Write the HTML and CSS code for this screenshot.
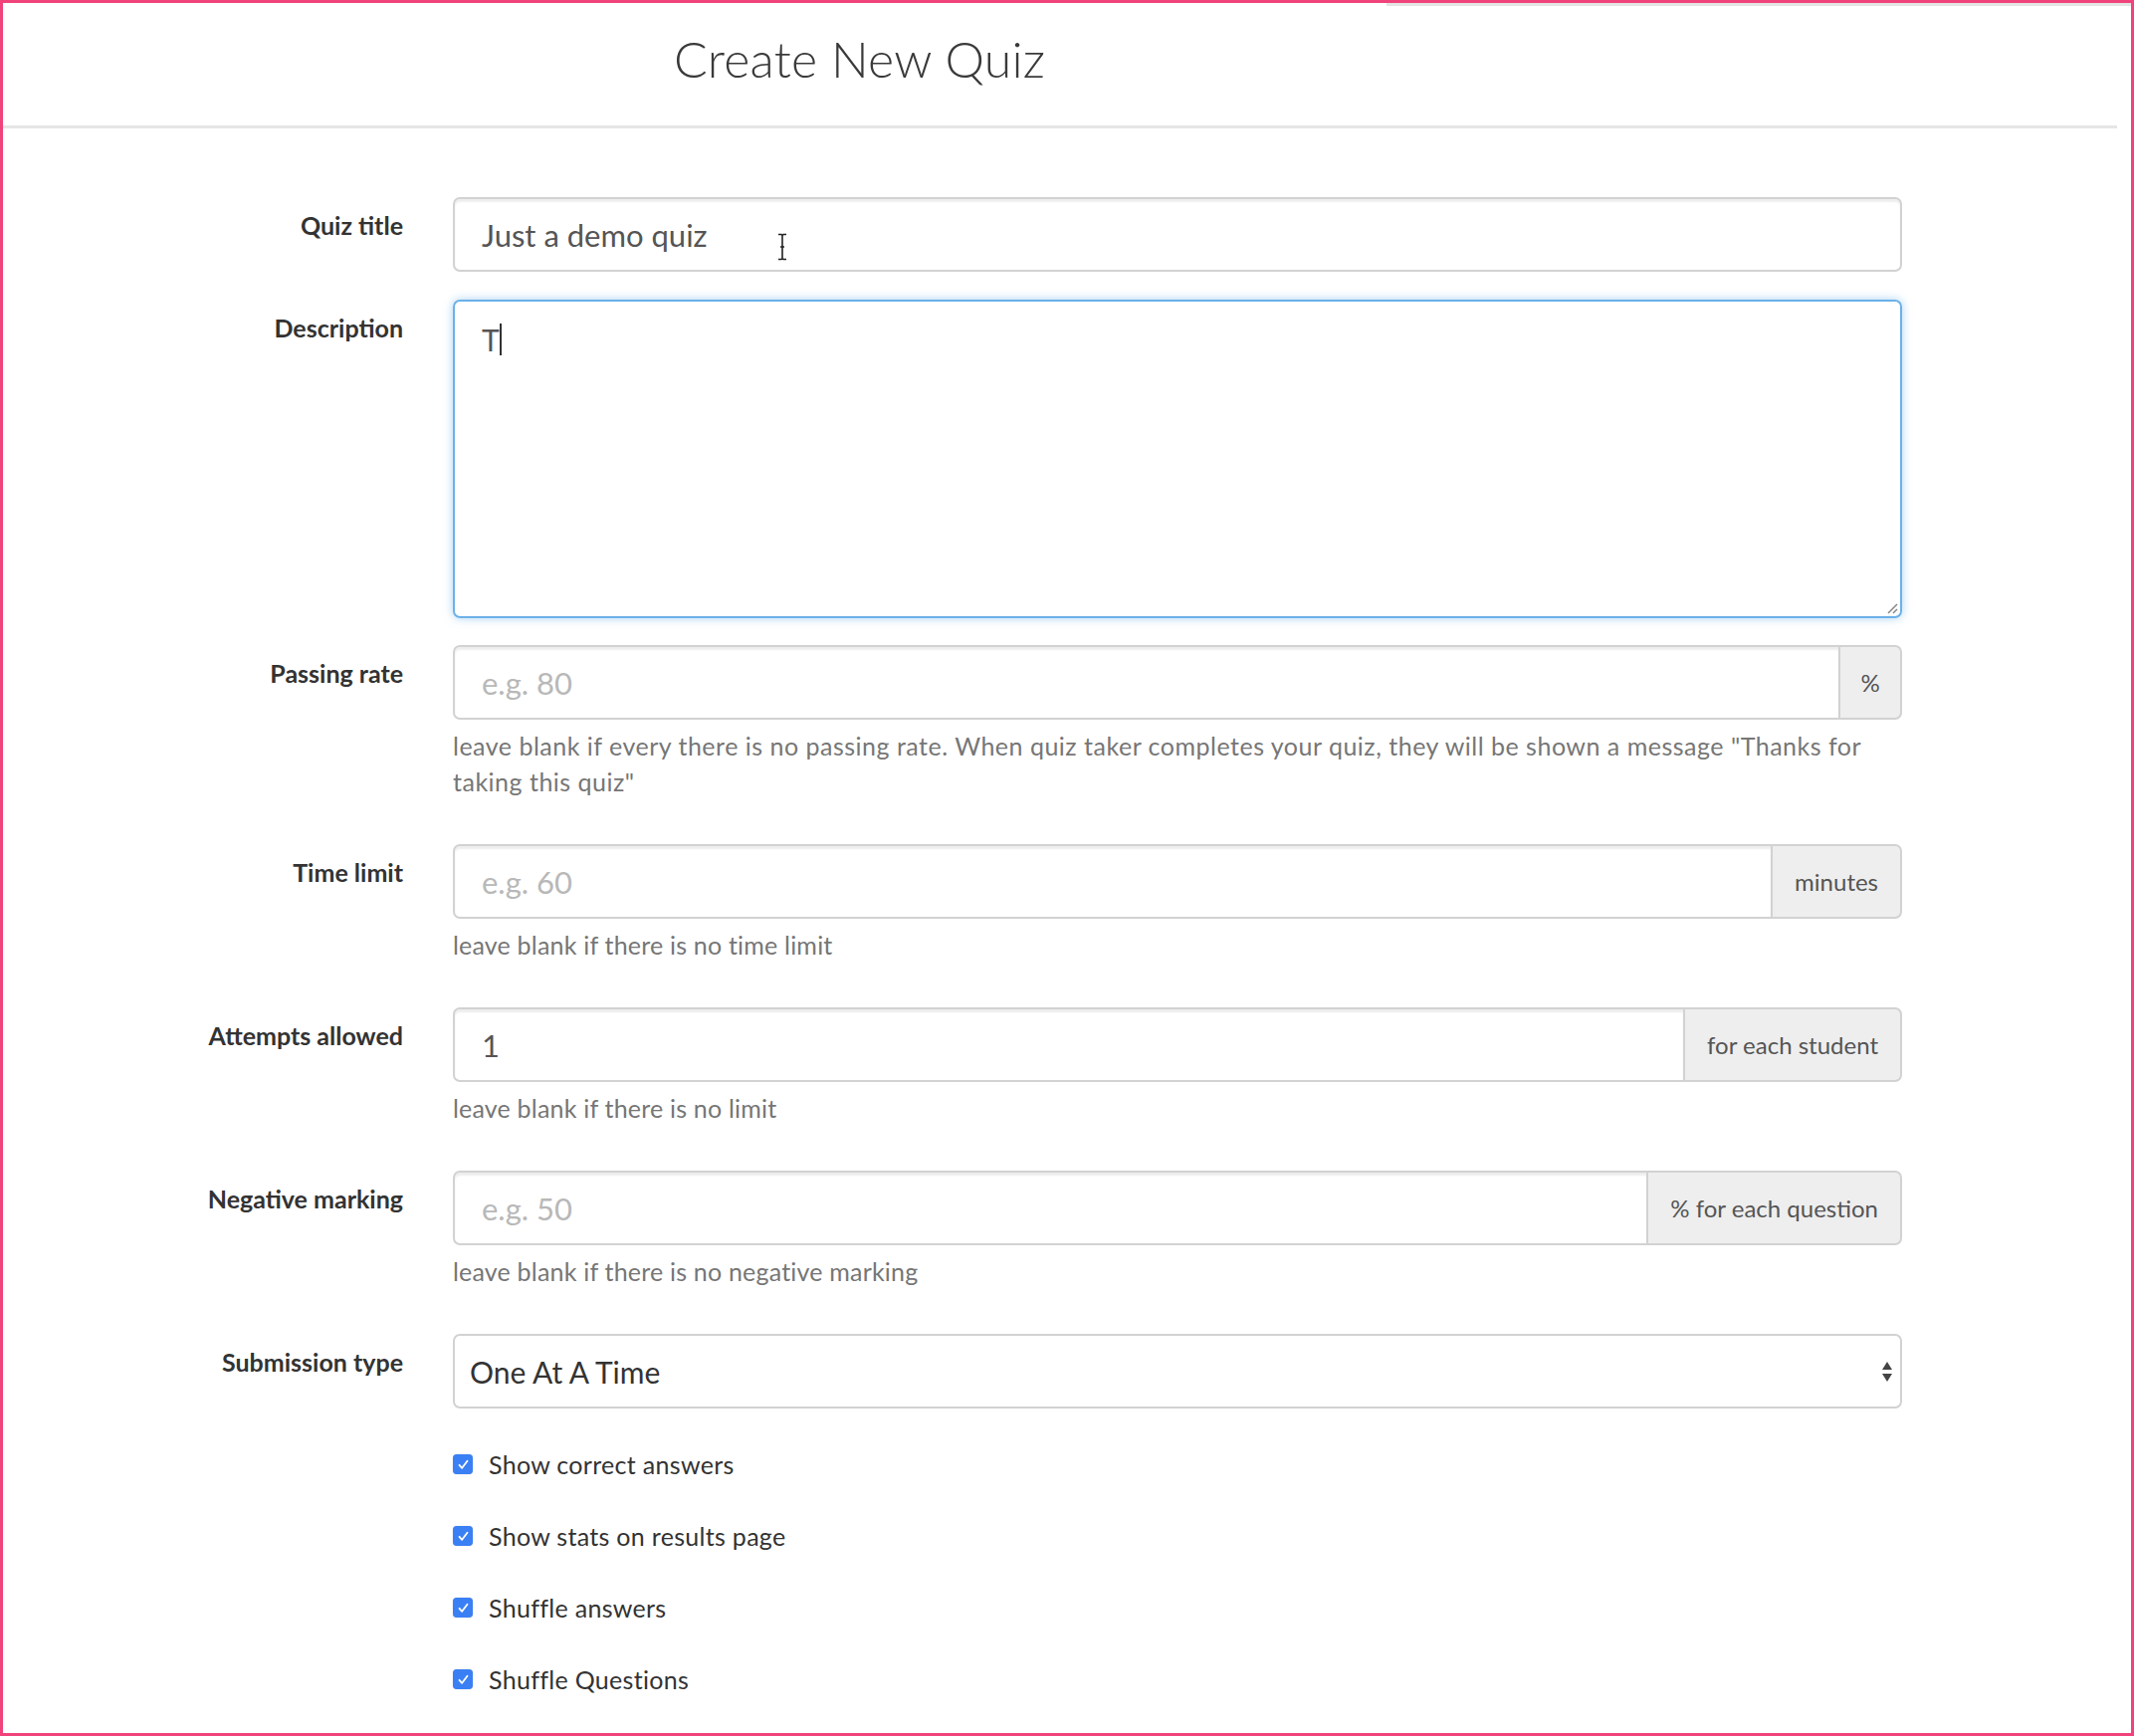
FILE: index.html
```html
<!DOCTYPE html>
<html lang="en">
<head>
<meta charset="utf-8">
<title>Create New Quiz</title>
<link rel="stylesheet" href="styles.css">
</head>
<body>
<div class="frame">
  <div class="topstrip"></div>
  <header class="header">
    <h1 class="title">Create New Quiz</h1>
  </header>
  <form class="form">
    <div class="row group">
      <label class="label">Quiz title</label>
      <div class="control has-cursor">
        <input class="input" type="text" value="Just a demo quiz">
        <svg class="ibeam" width="10" height="28" viewBox="0 0 10 28"><path d="M1 1.5h3l1 1 1-1h3M5 2.5v23M1 26.5h3l1-1 1 1h3M3 14h4" fill="none" stroke="#222" stroke-width="1.6"/></svg>
      </div>
    </div>
    <div class="row group-ta">
      <label class="label">Description</label>
      <div class="control">
        <div class="textarea"><span class="ta-text">T</span><span class="caret"></span>
          <svg class="grip" width="14" height="14" viewBox="0 0 14 14"><path d="M13 4L4 13M13 9L9 13" stroke="#888" stroke-width="1.5" fill="none"/></svg>
        </div>
      </div>
    </div>
    <div class="row group-help">
      <label class="label">Passing rate</label>
      <div class="control">
        <div class="input-group">
          <input class="input ig-input" type="text" placeholder="e.g. 80">
          <span class="addon addon-pct">%</span>
        </div>
        <p class="help help-long">leave blank if every there is no passing rate. When quiz taker completes your quiz, they will be shown a message "Thanks for taking this quiz"</p>
      </div>
    </div>
    <div class="row group-help">
      <label class="label">Time limit</label>
      <div class="control">
        <div class="input-group">
          <input class="input ig-input" type="text" placeholder="e.g. 60">
          <span class="addon">minutes</span>
        </div>
        <p class="help">leave blank if there is no time limit</p>
      </div>
    </div>
    <div class="row group-help">
      <label class="label">Attempts allowed</label>
      <div class="control">
        <div class="input-group">
          <input class="input ig-input" type="text" value="1">
          <span class="addon">for each student</span>
        </div>
        <p class="help">leave blank if there is no limit</p>
      </div>
    </div>
    <div class="row group-help">
      <label class="label">Negative marking</label>
      <div class="control">
        <div class="input-group">
          <input class="input ig-input" type="text" placeholder="e.g. 50">
          <span class="addon">% for each question</span>
        </div>
        <p class="help">leave blank if there is no negative marking</p>
      </div>
    </div>
    <div class="row">
      <label class="label">Submission type</label>
      <div class="control">
        <div class="select">
          <span class="select-text">One At A Time</span>
          <svg class="arrows" width="12" height="22" viewBox="0 0 12 22"><path d="M6 1L11 9H1Z M6 21L11 13H1Z" fill="#444"/></svg>
        </div>
      </div>
    </div>
    <div class="checks">
      <div class="check"><span class="box"><svg width="13" height="13" viewBox="0 0 13 13"><path d="M2.5 6.8L5.2 9.8L10.5 2.8" fill="none" stroke="#fff" stroke-width="1.8" stroke-linecap="round" stroke-linejoin="round"/></svg></span><span>Show correct answers</span></div>
      <div class="check"><span class="box"><svg width="13" height="13" viewBox="0 0 13 13"><path d="M2.5 6.8L5.2 9.8L10.5 2.8" fill="none" stroke="#fff" stroke-width="1.8" stroke-linecap="round" stroke-linejoin="round"/></svg></span><span>Show stats on results page</span></div>
      <div class="check"><span class="box"><svg width="13" height="13" viewBox="0 0 13 13"><path d="M2.5 6.8L5.2 9.8L10.5 2.8" fill="none" stroke="#fff" stroke-width="1.8" stroke-linecap="round" stroke-linejoin="round"/></svg></span><span>Shuffle answers</span></div>
      <div class="check"><span class="box"><svg width="13" height="13" viewBox="0 0 13 13"><path d="M2.5 6.8L5.2 9.8L10.5 2.8" fill="none" stroke="#fff" stroke-width="1.8" stroke-linecap="round" stroke-linejoin="round"/></svg></span><span>Shuffle Questions</span></div>
    </div>
  </form>
</div>
</body>
</html>
```

FILE: styles.css
```css
html, body {
  margin: 0;
  padding: 0;
  background: #fff;
}
body {
  font-family: "Lato", "Liberation Sans", sans-serif;
  color: #333;
}
.frame {
  box-sizing: border-box;
  width: 2144px;
  height: 1744px;
  border: 3px solid #f0437c;
  overflow: hidden;
  position: relative;
}
.topstrip {
  height: 3px;
  margin-left: 1390px;
  background: #e4e4e4;
}
.header {
  box-sizing: border-box;
  height: 123px;
  padding-top: 24px;
  padding-left: 674px;
  margin-right: 14px;
  border-bottom: 3px solid #e6e6e6;
}
.title {
  margin: 0;
  font-size: 50px;
  line-height: 59px;
  font-weight: 300;
  color: #3a3a3a;
  letter-spacing: 0.2px;
}
.form {
  padding-top: 69px;
}
.row {
  display: grid;
  grid-template-columns: 402px 1456px;
  column-gap: 50px;
}
.group { margin-bottom: 28px; }
.group-ta { margin-bottom: 27px; }
.group-help { margin-bottom: 0; }
.label {
  text-align: right;
  font-weight: 700;
  font-size: 25px;
  line-height: 36px;
  padding-top: 10px;
  color: #333;
}
.control {
  position: relative;
}
.input {
  box-sizing: border-box;
  display: block;
  width: 100%;
  height: 75px;
  margin: 0;
  border: 2px solid #d2d2d2;
  border-radius: 7px;
  padding: 0 27px;
  font-family: inherit;
  font-size: 31px;
  color: #555;
  background: #fff;
  outline: none;
  box-shadow: inset 0 3px 2px rgba(0,0,0,0.07);
}
.input::placeholder {
  color: #b8b8b8;
}
.ibeam {
  position: absolute;
  left: 326px;
  top: 36px;
}
.textarea {
  box-sizing: border-box;
  position: relative;
  height: 320px;
  border: 2px solid #6cb1e8;
  border-radius: 7px;
  padding: 18px 27px;
  font-size: 30px;
  line-height: 40px;
  color: #555;
  box-shadow: 0 0 10px rgba(102,175,233,0.55);
  display: flex;
  align-items: flex-start;
}
.caret {
  display: inline-block;
  width: 2px;
  height: 32px;
  margin-top: 4px;
  background: #333;
}
.grip {
  position: absolute;
  right: 2px;
  bottom: 2px;
}
.input-group {
  display: flex;
  height: 75px;
}
.ig-input {
  flex: 1;
  min-width: 0;
  border-top-right-radius: 0;
  border-bottom-right-radius: 0;
}
.addon {
  box-sizing: border-box;
  display: flex;
  align-items: center;
  justify-content: center;
  padding: 0 22px;
  background: #eeeeee;
  border: 2px solid #d2d2d2;
  border-left: 0;
  border-radius: 0 7px 7px 0;
  font-size: 24px;
  color: #555;
}
.addon-pct {
  width: 62px;
  padding: 0;
}
.help {
  margin: 8px 0 45px;
  font-size: 25px;
  letter-spacing: 0.2px;
  line-height: 36px;
  color: #767676;
}
.help-long {
  max-width: 1440px;
  letter-spacing: 0.5px;
}
.select {
  box-sizing: border-box;
  height: 75px;
  border: 2px solid #d2d2d2;
  border-radius: 7px;
  padding: 0 7px 0 15px;
  display: flex;
  align-items: center;
  justify-content: space-between;
  font-size: 30px;
  color: #333;
  background: #fff;
}
.checks {
  margin-left: 452px;
  margin-top: 20px;
}
.check {
  height: 72px;
  display: flex;
  align-items: center;
  gap: 16px;
  font-size: 25px;
  letter-spacing: 0.3px;
  color: #333;
}
.box {
  width: 20px;
  height: 20px;
  border-radius: 4px;
  background: #3a80f4;
  display: flex;
  align-items: center;
  justify-content: center;
  box-shadow: 0 0 1px rgba(0,0,0,0.3);
}
.box svg { display: block; }
```
